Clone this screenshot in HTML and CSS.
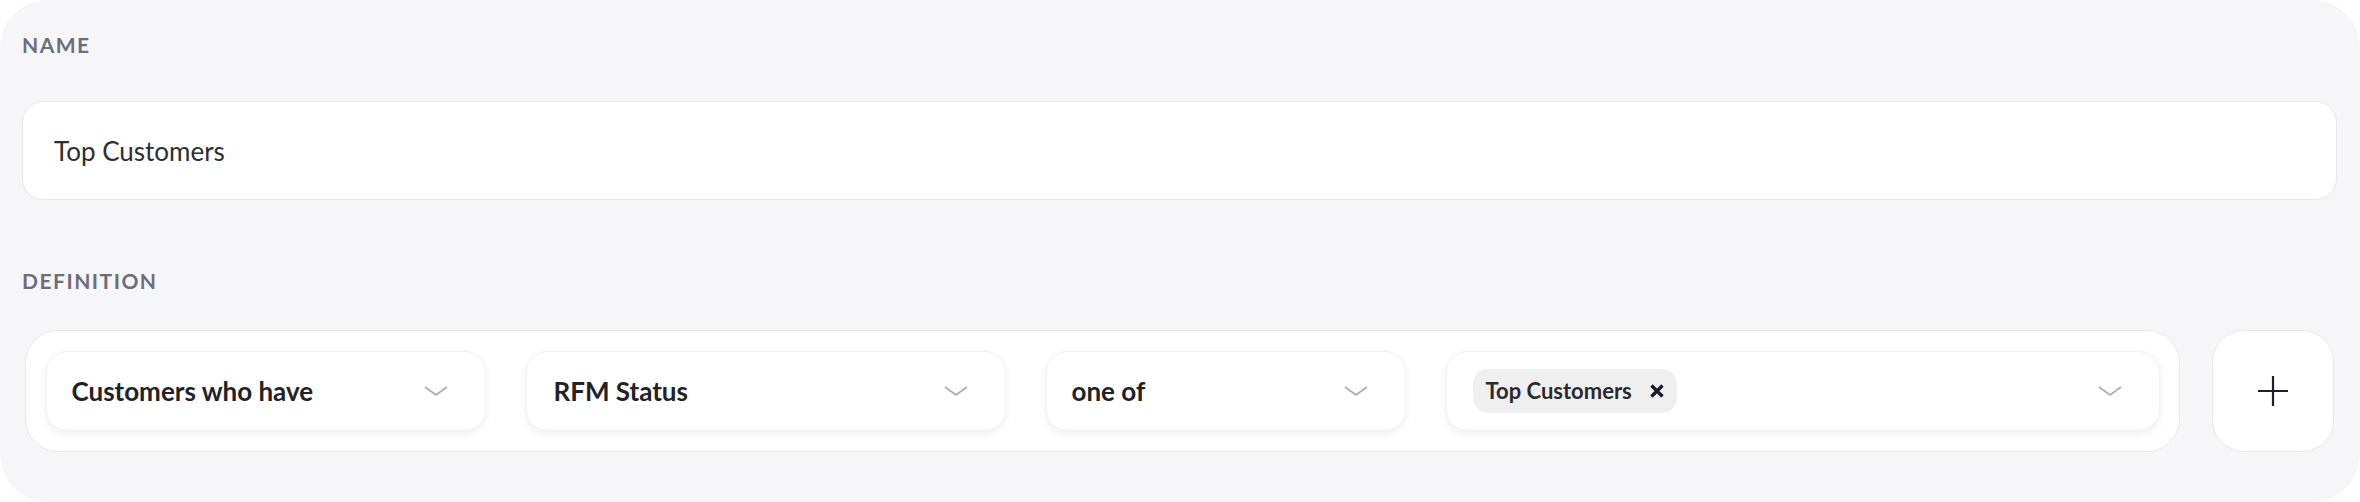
FILE: index.html
```html
<!DOCTYPE html>
<html>
<head>
    <meta charset="utf-8">
    <link rel="stylesheet" href="styles.css">
</head>
<body>
    <div class="card">
        <div class="field-label">Name</div>
        <div class="name-input">Top Customers</div>

        <div class="field-label definition-label">Definition</div>
        <div class="definition-row">
            <div class="rule">
                <div class="select select-who">
                    <span class="select-text">Customers who have</span>
                    <svg class="chevron" width="24" height="10" viewBox="0 0 24 10"><polyline points="1,1 12,9 23,1" fill="none" stroke="#aaa8bb" stroke-width="1.6"/></svg>
                </div>
                <div class="select select-field">
                    <span class="select-text">RFM Status</span>
                    <svg class="chevron" width="24" height="10" viewBox="0 0 24 10"><polyline points="1,1 12,9 23,1" fill="none" stroke="#aaa8bb" stroke-width="1.6"/></svg>
                </div>
                <div class="select select-op">
                    <span class="select-text">one of</span>
                    <svg class="chevron" width="24" height="10" viewBox="0 0 24 10"><polyline points="1,1 12,9 23,1" fill="none" stroke="#aaa8bb" stroke-width="1.6"/></svg>
                </div>
                <div class="select select-values">
                    <span class="chip">
                        <span class="chip-text">Top Customers</span>
                        <svg class="chip-x" width="14" height="14" viewBox="0 0 14 14"><path d="M1.5 1.5 L12.5 12.5 M12.5 1.5 L1.5 12.5" stroke="#1d1c28" stroke-width="3.4"/></svg>
                    </span>
                    <svg class="chevron" width="24" height="10" viewBox="0 0 24 10"><polyline points="1,1 12,9 23,1" fill="none" stroke="#aaa8bb" stroke-width="1.6"/></svg>
                </div>
            </div>
            <button class="add-button">
                <svg width="32" height="32" viewBox="0 0 32 32"><path d="M16 1 V31 M1 16 H31" stroke="#1e1d2e" stroke-width="2.2"/></svg>
            </button>
        </div>
    </div>
</body>
</html>
```

FILE: styles.css
```css
body {
    margin: 0;
    background: #fff;
    font-family: Lato, "Open Sans", sans-serif;
}
.card {
    height: 502px;
    box-sizing: border-box;
    background: #f6f6f8;
    border-radius: 48px;
    padding: 32px 23px 0 22px;
}
.field-label {
    font-size: 21px;
    line-height: 25px;
    font-weight: bold;
    letter-spacing: 1.5px;
    text-transform: uppercase;
    color: #6e6d7c;
}
.name-input {
    margin-top: 44px;
    height: 99px;
    box-sizing: border-box;
    background: #fff;
    border: 1.5px solid #e7e7e9;
    border-radius: 21px;
    padding-left: 31px;
    display: flex;
    align-items: center;
    font-size: 26px;
    color: #2d2d30;
}
.definition-label {
    margin-top: 68px;
}
.definition-row {
    margin-top: 37px;
    display: flex;
    gap: 32px;
    padding: 0 3px;
}
.rule {
    flex: 1;
    height: 122px;
    box-sizing: border-box;
    background: #fff;
    border: 1.5px solid #e9e9eb;
    border-radius: 33px;
    padding: 19.5px;
    display: flex;
    gap: 40px;
}
.select {
    height: 80px;
    box-sizing: border-box;
    background: #fff;
    border-radius: 22px;
    border: 1px solid #f3f3f4;
    box-shadow: 0 3px 8px rgba(30, 30, 50, 0.07);
    padding: 0 37px 0 25px;
    display: flex;
    align-items: center;
    justify-content: space-between;
}
.select-who {
    width: 440px;
}
.select-field {
    width: 480px;
    padding-left: 27px;
}
.select-op {
    width: 360px;
}
.select-values {
    flex: 1;
    padding-left: 26px;
}
.select-text {
    font-size: 26px;
    font-weight: bold;
    color: #222226;
}
.chip {
    height: 44px;
    box-sizing: border-box;
    background: #efeff0;
    border-radius: 15px;
    padding: 0 13px 0 13px;
    display: flex;
    align-items: center;
    gap: 18px;
}
.chip-text {
    font-size: 22px;
    font-weight: bold;
    color: #2a2a2e;
}
.add-button {
    width: 122px;
    height: 122px;
    box-sizing: border-box;
    background: #fff;
    border: 1.5px solid #e9e9eb;
    border-radius: 32px;
    display: flex;
    align-items: center;
    justify-content: center;
    padding: 0;
}
```
